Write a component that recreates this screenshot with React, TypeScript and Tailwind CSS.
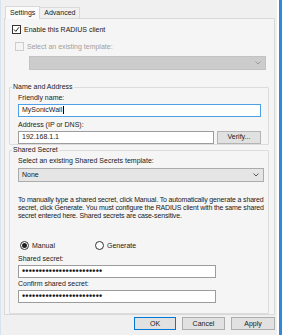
import React from "react";

function Dots({ n }: { n: number }) {
  return <span className="tracking-[0.2px] text-[9px] leading-none font-bold">{"•".repeat(n)}</span>;
}

function TextBox({ children, w, focus }: { children?: React.ReactNode; w: string; focus?: boolean }) {
  return (
    <div
      className={`${w} h-[13px] bg-white flex items-center pl-[3px] border ${
        focus ? "border-[#4f9fe8]" : "border-[#9c9c9c]"
      }`}
    >
      {children}
    </div>
  );
}

function Chevron({ color }: { color: string }) {
  return (
    <svg width="6" height="4" viewBox="0 0 6 4" className="mr-[4px]">
      <path d="M0.5 0.5 L3 3 L5.5 0.5" fill="none" stroke={color} strokeWidth="1" />
    </svg>
  );
}

export default function App() {
  return (
    <div className="w-[282px] h-[335px] bg-[#f0f0f0] flex overflow-hidden text-[7px] leading-[8px] text-[#1a1a1a] font-['Liberation_Sans',Arial,sans-serif]">
      <div className="w-[1px] bg-[#d6e4f2]" />
      <div className="flex-1 flex flex-col pl-[3px] pt-[5px]">
        {/* tabs */}
        <div className="flex items-end h-[13px] pl-[1px]">
          <div className="h-[13px] px-[4px] flex items-center bg-[#fbfbfb] border border-b-0 border-[#d9d9d9] relative z-10 -mb-px">
            Settings
          </div>
          <div className="h-[11px] px-[4px] flex items-center bg-[#f0f0f0] border border-l-0 border-b-0 border-[#d9d9d9]">
            Advanced
          </div>
        </div>
        {/* panel */}
        <div className="w-[271px] h-[297px] border border-[#d9d9d9] bg-[#f5f5f5] flex flex-col pt-[6px] px-[3px]">
          <div className="flex items-center gap-[3px] pl-[4px] h-[10px]">
            <div className="w-[9px] h-[9px] border border-[#333] bg-white flex items-center justify-center">
              <svg width="7" height="7" viewBox="0 0 7 7">
                <path d="M1 3.5 L2.8 5.4 L6 1.2" fill="none" stroke="#222" strokeWidth="1" />
              </svg>
            </div>
            <span>Enable this RADIUS client</span>
          </div>
          <div className="flex items-center gap-[3px] pl-[7px] h-[10px] mt-[7px] text-[#a0a0a0]">
            <div className="w-[9px] h-[9px] border border-[#cdcdcd] bg-[#f5f5f5]" />
            <span>Select an existing template:</span>
          </div>
          <div className="ml-[21px] mt-[4px] w-[237px] h-[14px] bg-[#cccccc] border border-[#c2c2c2] flex items-center justify-end">
            <Chevron color="#9a9a9a" />
          </div>

          {/* Name and Address */}
          <div className="relative mt-[17px] ml-[1px] w-[260px] h-[58px] border border-[#dcdcdc] rounded-[1px]">
            <span className="absolute -top-[5px] left-[2px] bg-[#f5f5f5] px-[1px]">Name and Address</span>
            <div className="pl-[8px] pt-[6px]">
              <div>Friendly name:</div>
              <div className="mt-[2px]">
                <TextBox w="w-[243px]" focus>
                  MySonicWall<span className="w-px h-[8px] bg-black ml-px" />
                </TextBox>
              </div>
              <div className="mt-[4px]">Address (IP or DNS):</div>
              <div className="mt-[2px] flex gap-[3px]">
                <TextBox w="w-[196px]">192.168.1.1</TextBox>
                <div className="w-[44px] h-[13px] bg-[#e1e1e1] border border-[#b4b4b4] flex items-center justify-center">
                  Verify...
                </div>
              </div>
            </div>
          </div>

          {/* Shared Secret */}
          <div className="relative mt-[5px] ml-[1px] w-[260px] h-[165px] border border-[#dcdcdc] rounded-[1px]">
            <span className="absolute -top-[5px] left-[2px] bg-[#f5f5f5] px-[1px]">Shared Secret</span>
            <div className="pl-[8px] pt-[6px]">
              <div>Select an existing Shared Secrets template:</div>
              <div className="mt-[3px] w-[246px] h-[14px] bg-[#e5e5e5] border border-[#acacac] flex items-center justify-between pl-[3px]">
                <span>None</span>
                <Chevron color="#555" />
              </div>
              <p className="mt-[14px] w-[250px] leading-[8px] tracking-[-0.15px]">
                To manually type a shared secret, click Manual. To automatically generate a shared secret, click
                Generate. You must configure the RADIUS client with the same shared secret entered here. Shared
                secrets are case-sensitive.
              </p>
              <div className="mt-[21px] flex items-center h-[10px]">
                <div className="flex items-center gap-[3px] w-[77px] pl-[2px]">
                  <div className="w-[9px] h-[9px] rounded-full border border-[#333] bg-white flex items-center justify-center">
                    <div className="w-[5px] h-[5px] rounded-full bg-[#222]" />
                  </div>
                  <span>Manual</span>
                </div>
                <div className="flex items-center gap-[3px]">
                  <div className="w-[9px] h-[9px] rounded-full border border-[#333] bg-white" />
                  <span>Generate</span>
                </div>
              </div>
              <div className="mt-[4px]">Shared secret:</div>
              <div className="mt-[2px]">
                <TextBox w="w-[198px]"><Dots n={24} /></TextBox>
              </div>
              <div className="mt-[2px]">Confirm shared secret:</div>
              <div className="mt-[2px]">
                <TextBox w="w-[198px]"><Dots n={24} /></TextBox>
              </div>
            </div>
          </div>
        </div>
        {/* buttons */}
        <div className="flex justify-end gap-[6px] mt-[2px] pr-[2px]">
          <div className="w-[42px] h-[13px] bg-[#e1e1e1] border border-[#0078d7] flex items-center justify-center">OK</div>
          <div className="w-[43px] h-[13px] bg-[#e1e1e1] border border-[#adadad] flex items-center justify-center">Cancel</div>
          <div className="w-[44px] h-[13px] bg-[#e1e1e1] border border-[#adadad] flex items-center justify-center">Apply</div>
        </div>
      </div>
      <div className="w-[2px] bg-white" />
      <div className="w-[3px] bg-[#2f89d8]" />
    </div>
  );
}
